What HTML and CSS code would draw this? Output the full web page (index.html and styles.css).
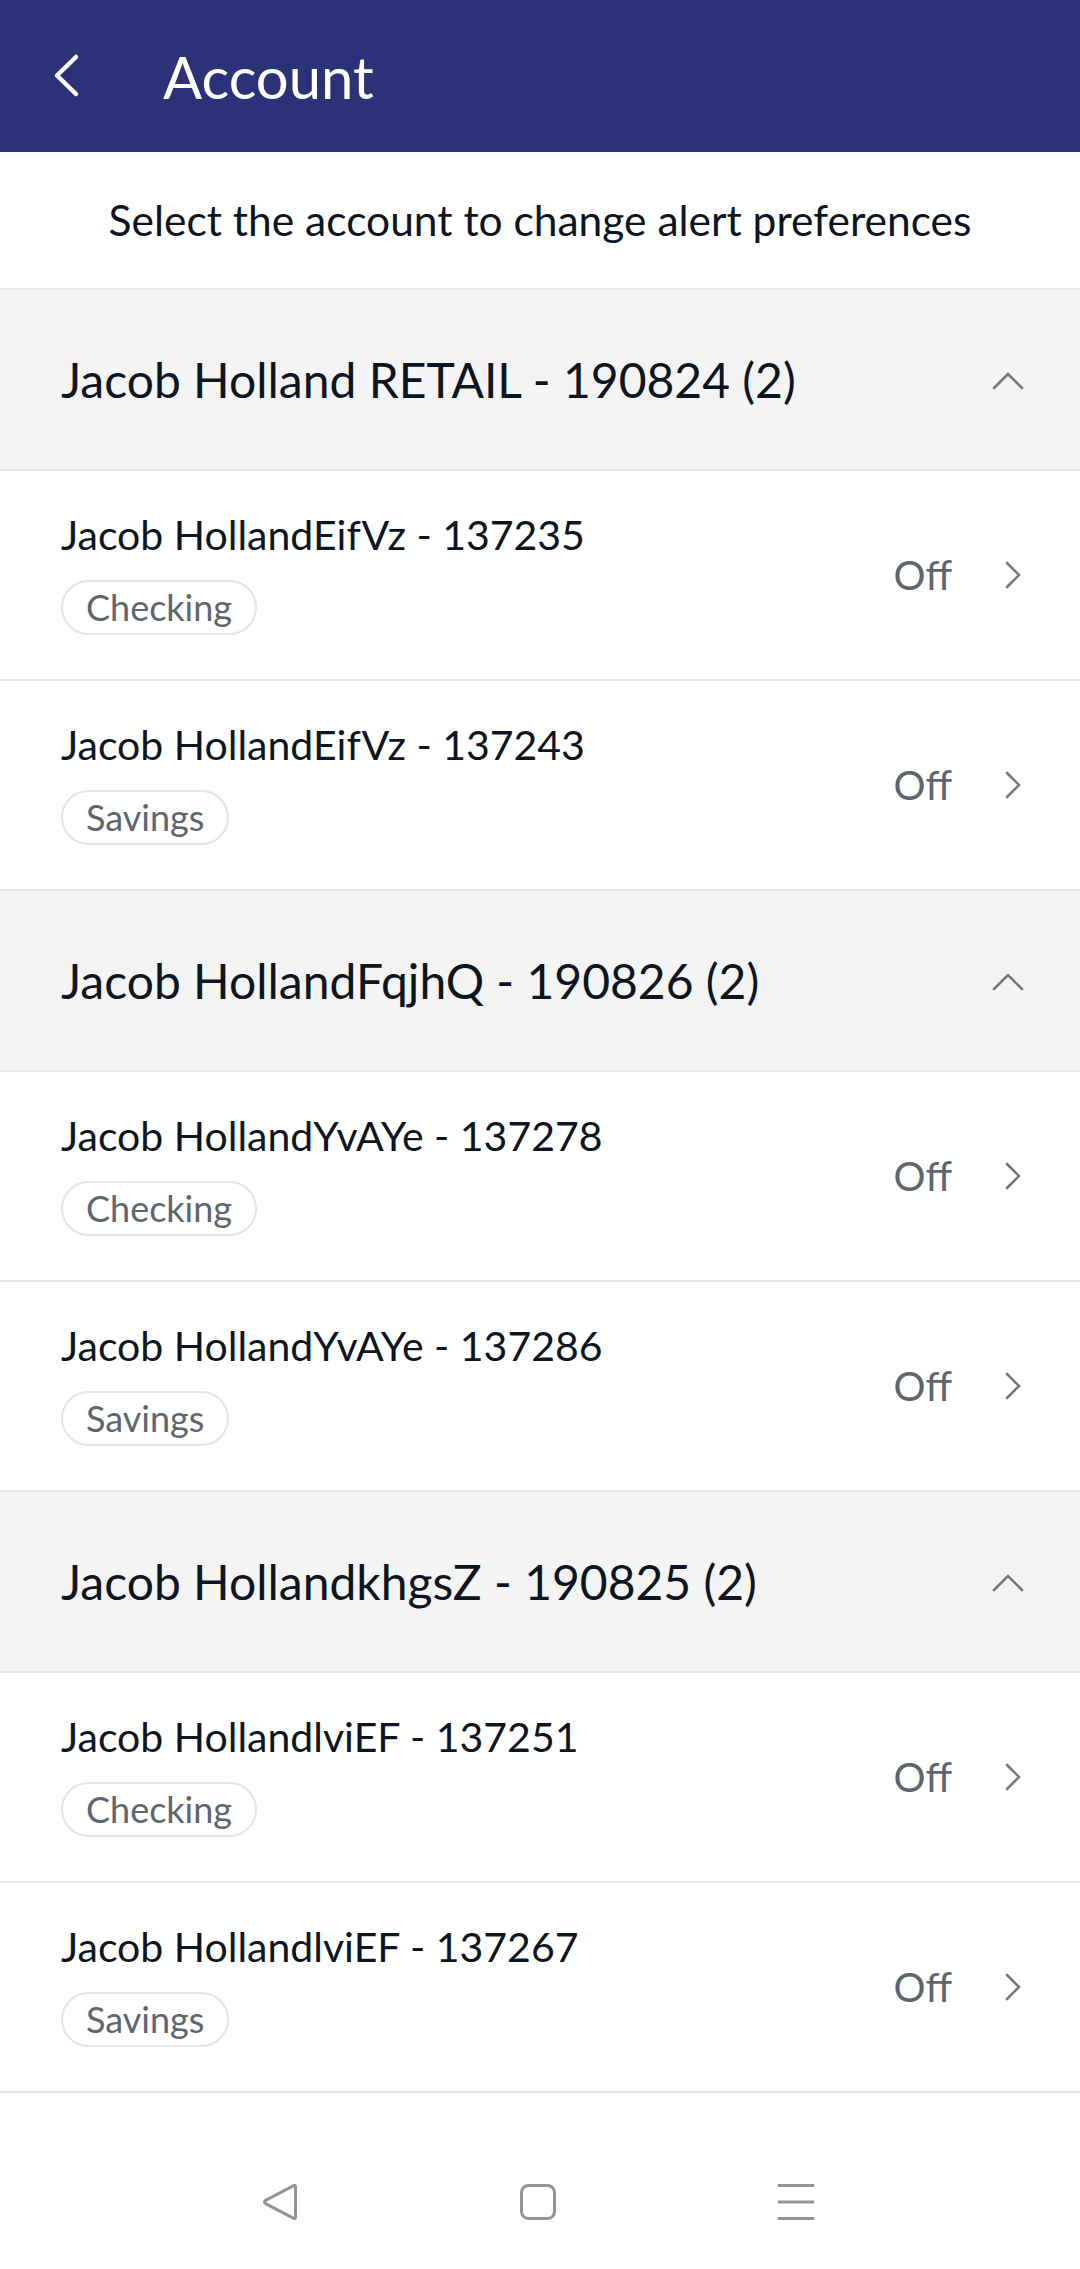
FILE: index.html
```html
<!DOCTYPE html>
<html lang="en">
<head>
    <meta charset="UTF-8">
    <meta name="viewport" content="width=device-width, initial-scale=1.0">
    <title>Account</title>
    <link rel="stylesheet" href="styles.css">
</head>
<body>
    <!-- Bar atas -->
    <header class="appbar">
        <svg class="back" width="30" height="48" viewBox="0 0 30 48">
            <path d="M25 5 L6 23.5 L25 42" fill="none" stroke="#fff" stroke-width="4.5" stroke-linecap="round" stroke-linejoin="round"/>
        </svg>
        <h1>Account</h1>
    </header>

    <p class="intro">Select the account to change alert preferences</p>

    <!-- Daftar akun per grup -->
    <div class="group">
        <div class="group-head">
            <span>Jacob Holland RETAIL - 190824 (2)</span>
            <svg class="up" width="32" height="20" viewBox="0 0 32 20"><path d="M2 18 L16 4 L30 18" fill="none" stroke="#777" stroke-width="2.6" stroke-linecap="round"/></svg>
        </div>
        <div class="row">
            <div class="info">
                <div class="name">Jacob HollandEifVz - 137235</div>
                <span class="chip">Checking</span>
            </div>
            <span class="status">Off</span>
            <svg class="next" width="18" height="28" viewBox="0 0 18 28"><path d="M3 2 L15 14 L3 26" fill="none" stroke="#777" stroke-width="2.6" stroke-linecap="round"/></svg>
        </div>
        <div class="row">
            <div class="info">
                <div class="name">Jacob HollandEifVz - 137243</div>
                <span class="chip">Savings</span>
            </div>
            <span class="status">Off</span>
            <svg class="next" width="18" height="28" viewBox="0 0 18 28"><path d="M3 2 L15 14 L3 26" fill="none" stroke="#777" stroke-width="2.6" stroke-linecap="round"/></svg>
        </div>
    </div>

    <div class="group">
        <div class="group-head">
            <span>Jacob HollandFqjhQ - 190826 (2)</span>
            <svg class="up" width="32" height="20" viewBox="0 0 32 20"><path d="M2 18 L16 4 L30 18" fill="none" stroke="#777" stroke-width="2.6" stroke-linecap="round"/></svg>
        </div>
        <div class="row">
            <div class="info">
                <div class="name">Jacob HollandYvAYe - 137278</div>
                <span class="chip">Checking</span>
            </div>
            <span class="status">Off</span>
            <svg class="next" width="18" height="28" viewBox="0 0 18 28"><path d="M3 2 L15 14 L3 26" fill="none" stroke="#777" stroke-width="2.6" stroke-linecap="round"/></svg>
        </div>
        <div class="row">
            <div class="info">
                <div class="name">Jacob HollandYvAYe - 137286</div>
                <span class="chip">Savings</span>
            </div>
            <span class="status">Off</span>
            <svg class="next" width="18" height="28" viewBox="0 0 18 28"><path d="M3 2 L15 14 L3 26" fill="none" stroke="#777" stroke-width="2.6" stroke-linecap="round"/></svg>
        </div>
    </div>

    <div class="group">
        <div class="group-head">
            <span>Jacob HollandkhgsZ - 190825 (2)</span>
            <svg class="up" width="32" height="20" viewBox="0 0 32 20"><path d="M2 18 L16 4 L30 18" fill="none" stroke="#777" stroke-width="2.6" stroke-linecap="round"/></svg>
        </div>
        <div class="row">
            <div class="info">
                <div class="name">Jacob HollandlviEF - 137251</div>
                <span class="chip">Checking</span>
            </div>
            <span class="status">Off</span>
            <svg class="next" width="18" height="28" viewBox="0 0 18 28"><path d="M3 2 L15 14 L3 26" fill="none" stroke="#777" stroke-width="2.6" stroke-linecap="round"/></svg>
        </div>
        <div class="row">
            <div class="info">
                <div class="name">Jacob HollandlviEF - 137267</div>
                <span class="chip">Savings</span>
            </div>
            <span class="status">Off</span>
            <svg class="next" width="18" height="28" viewBox="0 0 18 28"><path d="M3 2 L15 14 L3 26" fill="none" stroke="#777" stroke-width="2.6" stroke-linecap="round"/></svg>
        </div>
    </div>

    <!-- Navigasi sistem -->
    <nav class="sysnav">
        <div class="slot">
            <svg width="38" height="38" viewBox="0 0 38 38"><path d="M34.5 4 L34.5 34 Q34.5 36.5 32.3 35.2 L4.5 20.6 Q2.5 19 4.5 17.4 L32.3 2.8 Q34.5 1.5 34.5 4 Z" fill="none" stroke="#939393" stroke-width="3" stroke-linejoin="round"/></svg>
        </div>
        <div class="slot">
            <svg width="38" height="38" viewBox="0 0 38 38"><rect x="2.5" y="2.5" width="33" height="33" rx="7" fill="none" stroke="#939393" stroke-width="3"/></svg>
        </div>
        <div class="slot">
            <svg width="38" height="38" viewBox="0 0 38 38"><path d="M1 2.5 H37 M1 19 H37 M1 35.5 H37" stroke="#939393" stroke-width="3"/></svg>
        </div>
    </nav>
</body>
</html>
```

FILE: styles.css
```css
/* Dasar halaman */
body {
    margin: 0;
    background-color: #fff;
    font-family: "Lato", "Open Sans", sans-serif;
    color: #0c1521;
}

/* Bar atas */
.appbar {
    display: flex;
    align-items: center;
    height: 152px;
    padding-left: 51px;
    background-color: #2b3277;
    box-sizing: border-box;
}

.appbar h1 {
    margin: 0 0 0 82px;
    font-size: 58px;
    font-weight: 400;
    color: #fff;
}

.intro {
    margin: 0;
    height: 136px;
    line-height: 136px;
    text-align: center;
    font-size: 42.5px;
    border-bottom: 2px solid #e3e6ea;
}

/* Header grup */
.group-head {
    display: flex;
    align-items: center;
    justify-content: space-between;
    height: 179px;
    padding: 0 56px 0 61px;
    background-color: #f4f4f5;
    border-bottom: 2px solid #e3e6ea;
    font-size: 48px;
}

/* Baris akun */
.row {
    display: flex;
    align-items: center;
    height: 208px;
    padding: 0 58px 0 61px;
    border-bottom: 2px solid #e3e6ea;
}

.info {
    flex: 1;
    display: flex;
    flex-direction: column;
    align-items: flex-start;
    gap: 20px;
    padding-bottom: 5px;
}

.name {
    font-size: 41px;
    line-height: 50px;
}

.chip {
    padding: 0 23px;
    height: 51px;
    line-height: 51px;
    font-size: 36px;
    color: #5d666f;
    border: 2px solid #e2e5e9;
    border-radius: 28px;
}

.status {
    font-size: 40px;
    color: #5d666f;
    margin-right: 52px;
}

/* Navigasi sistem */
.sysnav {
    display: flex;
    align-items: center;
    height: 176px;
    padding: 42px 0 0 151px;
    box-sizing: border-box;
}

.slot {
    width: 258px;
    display: flex;
    justify-content: center;
}
```
